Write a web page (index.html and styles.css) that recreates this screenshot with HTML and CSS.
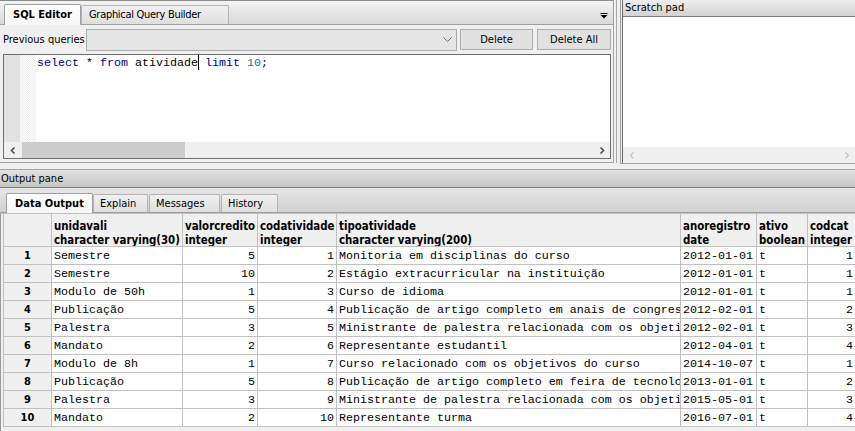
FILE: index.html
```html
<!DOCTYPE html>
<html lang="pt">
<head>
<meta charset="utf-8">
<title>Query</title>
<link rel="stylesheet" href="styles.css">
</head>
<body>
<div class="app">
  <div class="top">
    <div class="query-pane">
      <div class="tabbar">
        <div class="tab tab-active tab-sql">SQL Editor</div>
        <div class="tab tab-gqb">Graphical Query Builder</div>
        <svg class="tabmenu" width="8" height="6" viewBox="0 0 8 6"><rect x="0.5" y="0" width="7" height="1" fill="#000"/><path d="M0.5 2H7.5L4 5.5Z" fill="#000"/></svg>
      </div>
      <div class="prev-row">
        <span class="prev-label">Previous queries</span>
        <div class="combo">
          <svg class="combo-arrow" width="9" height="5" viewBox="0 0 9 5"><path d="M0.5 0.5L4.5 4.5L8.5 0.5" fill="none" stroke="#6d6d6d" stroke-width="1"/></svg>
        </div>
        <button class="btn btn-delete">Delete</button>
        <button class="btn btn-delete-all">Delete All</button>
      </div>
      <div class="editor">
        <div class="editor-body">
          <div class="gutter"></div>
          <div class="fold"></div>
          <div class="code"><span class="kw">select</span> * <span class="kw">from</span> atividade<span class="caret"></span> <span class="kw">limit</span> <span class="num">10</span>;</div>
        </div>
        <div class="hscroll">
          <div class="sb-btn"><svg width="6" height="7" viewBox="0 0 6 7"><path d="M4.5 0.5L1.5 3.5L4.5 6.5" fill="none" stroke="#505050" stroke-width="1.6"/></svg></div>
          <div class="sb-thumb"></div>
          <div class="sb-track"></div>
          <div class="sb-btn"><svg width="6" height="7" viewBox="0 0 6 7"><path d="M1.5 0.5L4.5 3.5L1.5 6.5" fill="none" stroke="#505050" stroke-width="1.6"/></svg></div>
        </div>
      </div>
    </div>
    <div class="sash"></div>
    <div class="scratch">
      <div class="scratch-inner">
        <div class="scratch-title">Scratch pad</div>
        <div class="scratch-area"></div>
        <div class="hscroll hscroll-off">
          <div class="sb-btn"><svg width="6" height="7" viewBox="0 0 6 7"><path d="M4.5 0.5L1.5 3.5L4.5 6.5" fill="none" stroke="#c4c4c4" stroke-width="1.4"/></svg></div>
          <div class="sb-track"></div>
          <div class="sb-btn"><svg width="6" height="7" viewBox="0 0 6 7"><path d="M1.5 0.5L4.5 3.5L1.5 6.5" fill="none" stroke="#c4c4c4" stroke-width="1.4"/></svg></div>
        </div>
      </div>
    </div>
  </div>

  <div class="output">
    <div class="output-title">Output pane</div>
    <div class="out-tabbar">
      <div class="tab tab-active tab-data">Data Output</div>
      <div class="tab tab-explain">Explain</div>
      <div class="tab tab-messages">Messages</div>
      <div class="tab tab-history">History</div>
    </div>
    <div class="grid">
      <div class="row head">
        <div class="cell rn"></div>
        <div class="cell hd">unidavali<br>character varying(30)</div>
        <div class="cell hd">valorcredito<br>integer</div>
        <div class="cell hd">codatividade<br>integer</div>
        <div class="cell hd">tipoatividade<br>character varying(200)</div>
        <div class="cell hd">anoregistro<br>date</div>
        <div class="cell hd">ativo<br>boolean</div>
        <div class="cell hd">codcat<br>integer</div>
      </div>
      <div class="row"><div class="cell rn">1</div><div class="cell">Semestre</div><div class="cell r">5</div><div class="cell r">1</div><div class="cell">Monitoria em disciplinas do curso</div><div class="cell">2012-01-01</div><div class="cell">t</div><div class="cell r">1</div></div>
      <div class="row"><div class="cell rn">2</div><div class="cell">Semestre</div><div class="cell r">10</div><div class="cell r">2</div><div class="cell">Estágio extracurricular na instituição</div><div class="cell">2012-01-01</div><div class="cell">t</div><div class="cell r">1</div></div>
      <div class="row"><div class="cell rn">3</div><div class="cell">Modulo de 50h</div><div class="cell r">1</div><div class="cell r">3</div><div class="cell">Curso de idioma</div><div class="cell">2012-01-01</div><div class="cell">t</div><div class="cell r">1</div></div>
      <div class="row"><div class="cell rn">4</div><div class="cell">Publicação</div><div class="cell r">5</div><div class="cell r">4</div><div class="cell">Publicação de artigo completo em anais de congres</div><div class="cell">2012-02-01</div><div class="cell">t</div><div class="cell r">2</div></div>
      <div class="row"><div class="cell rn">5</div><div class="cell">Palestra</div><div class="cell r">3</div><div class="cell r">5</div><div class="cell">Ministrante de palestra relacionada com os objeti</div><div class="cell">2012-02-01</div><div class="cell">t</div><div class="cell r">3</div></div>
      <div class="row"><div class="cell rn">6</div><div class="cell">Mandato</div><div class="cell r">2</div><div class="cell r">6</div><div class="cell">Representante estudantil</div><div class="cell">2012-04-01</div><div class="cell">t</div><div class="cell r">4</div></div>
      <div class="row"><div class="cell rn">7</div><div class="cell">Modulo de 8h</div><div class="cell r">1</div><div class="cell r">7</div><div class="cell">Curso relacionado com os objetivos do curso</div><div class="cell">2014-10-07</div><div class="cell">t</div><div class="cell r">1</div></div>
      <div class="row"><div class="cell rn">8</div><div class="cell">Publicação</div><div class="cell r">5</div><div class="cell r">8</div><div class="cell">Publicação de artigo completo em feira de tecnolo</div><div class="cell">2013-01-01</div><div class="cell">t</div><div class="cell r">2</div></div>
      <div class="row"><div class="cell rn">9</div><div class="cell">Palestra</div><div class="cell r">3</div><div class="cell r">9</div><div class="cell">Ministrante de palestra relacionada com os objeti</div><div class="cell">2015-05-01</div><div class="cell">t</div><div class="cell r">3</div></div>
      <div class="row"><div class="cell rn">10</div><div class="cell">Mandato</div><div class="cell r">2</div><div class="cell r">10</div><div class="cell">Representante turma</div><div class="cell">2016-07-01</div><div class="cell">t</div><div class="cell r">4</div></div>
    </div>
  </div>
</div>
</body>
</html>
```

FILE: styles.css
```css
* { box-sizing: border-box; }
html, body { margin: 0; padding: 0; }
body {
  width: 855px;
  height: 431px;
  overflow: hidden;
  background: #f0f0f0;
  font-family: "DejaVu Sans Condensed", "DejaVu Sans", sans-serif;
  font-size: 11px;
  color: #000;
}
.app { display: flex; flex-direction: column; height: 431px; }

/* ---------- top area ---------- */
.top { display: flex; height: 169px; flex: none; }
.query-pane {
  width: 614px;
  height: 163px;
  display: flex;
  flex-direction: column;
  border-right: 1px solid #a0a0a0;
  border-bottom: 1px solid #a0a0a0;
  background: #f0f0f0;
}
.tabbar {
  height: 25px;
  flex: none;
  display: flex;
  align-items: flex-end;
  padding-left: 4px;
  border-top: 1px solid #8c8c8c;
  border-bottom: 1px solid #a0a0a0;
  background: linear-gradient(#f3f3f3, #d9d9d9);
}
.tab {
  flex: none;
  height: 19px;
  line-height: 18px;
  padding-left: 7px;
  white-space: nowrap;
  border: 1px solid #b4b4b4;
  border-bottom: none;
  border-radius: 2px 2px 0 0;
  background: linear-gradient(#f0f0f0, #dedede);
}
.tab-active {
  height: 21px;
  margin-bottom: -1px;
  padding-left: 0;
  text-align: center;
  font-weight: bold;
  line-height: 19px;
  border-color: #a0a0a0;
  background: linear-gradient(#ffffff, #f6f6f6);
  position: relative;
}
.tab-sql { width: 77px; }
.tab-gqb { width: 148px; letter-spacing: -0.3px; }
.tabmenu { align-self: flex-start; margin: 12px 5px 0 auto; }

.prev-row {
  height: 29px;
  flex: none;
  display: flex;
  align-items: center;
  padding-left: 3px;
}
.prev-label { width: 83px; flex: none; white-space: nowrap; }
.combo {
  width: 371px;
  height: 22px;
  flex: none;
  display: flex;
  align-items: center;
  justify-content: flex-end;
  padding-right: 4px;
  background: #e5e5e5;
  border: 1px solid #acacac;
}
.btn {
  height: 21px;
  flex: none;
  margin: 0;
  padding: 0;
  font: inherit;
  color: #000;
  background: #e1e1e1;
  border: 1px solid #adadad;
}
.btn-delete { width: 73px; margin-left: 3px; }
.btn-delete-all { width: 74px; margin-left: 4px; }

.editor {
  width: 608px;
  height: 105px;
  margin-left: 3px;
  flex: none;
  display: flex;
  flex-direction: column;
  border: 1px solid #6e6e6e;
}
.editor-body { flex: 1; display: flex; background: #fff; }
.gutter { width: 16px; flex: none; background: #e2e2e2; }
.fold {
  width: 16px;
  flex: none;
  background: repeating-conic-gradient(#ececec 0 25%, #ffffff 0 50%) 0 0 / 2px 2px;
}
.code {
  padding-left: 1px;
  font-family: "Liberation Mono", monospace;
  font-size: 11.67px;
  line-height: 16px;
  white-space: pre;
  color: #000;
}
.kw { color: #00007f; }
.num { color: #007f7f; }
.caret {
  display: inline-block;
  width: 1px;
  height: 15px;
  margin-right: -1px;
  vertical-align: -4px;
  background: #000;
}

.hscroll {
  height: 16px;
  flex: none;
  display: flex;
  background: #f0f0f0;
}
.sb-btn {
  width: 17px;
  flex: none;
  display: flex;
  align-items: center;
  justify-content: center;
}
.sb-thumb { width: 163px; flex: none; background: #cdcdcd; margin-left: 1px; }
.sb-track { flex: 1; }

.sash { width: 4px; height: 163px; margin-left: 2px; border-left: 1px solid #a8a8a8; flex: none; }
.scratch {
  flex: 1;
  height: 164px;
  padding-left: 1px;
  border-left: 1px solid #a0a0a0;
  border-bottom: 1px solid #a0a0a0;
}
.scratch-inner {
  height: 100%;
  display: flex;
  flex-direction: column;
  border-left: 1px solid #6a6a6a;
}
.scratch-title {
  height: 17px;
  flex: none;
  padding-left: 2px;
  line-height: 16px;
  color: #000;
  border-bottom: 1px solid #7a7a7a;
  background: linear-gradient(#efefef, #d2d2d2);
}
.scratch-area { flex: 1; background: #fff; }

/* ---------- output ---------- */
.output { flex: 1; display: flex; flex-direction: column; min-height: 0; }
.output-title {
  height: 19px;
  flex: none;
  padding-left: 1px;
  line-height: 17px;
  border-top: 1px solid #a6a6a6;
  border-bottom: 1px solid #7c7c7c;
  background: linear-gradient(#e2e2e2, #c6c6c6);
}
.out-tabbar {
  height: 25px;
  flex: none;
  display: flex;
  align-items: flex-end;
  padding-left: 6px;
  border-bottom: 1px solid #a0a0a0;
  background: linear-gradient(#e6e6e6, #d2d2d2);
}
.out-tabbar .tab { height: 18px; line-height: 17px; padding-left: 6px; }
.out-tabbar .tab-active { height: 20px; line-height: 19px; padding-left: 0; }
.tab-data { width: 87px; }
.tab-explain { width: 55px; padding-left: 7px; }
.tab-messages { width: 71px; margin-left: 1px; }
.tab-history { width: 57px; margin-left: 1px; }

.grid {
  flex: 1;
  overflow: hidden;
  padding-left: 2px;
  border-left: 1px solid #9a9a9a;
  border-top: 1px solid #c0c0c0;
  background: #f0f0f0;
}
.row {
  display: grid;
  grid-template-columns: 49px 131px 75px 79px 344px 76px 51px 48px;
  height: 18px;
  background: #fff;
}
.cell {
  overflow: hidden;
  white-space: nowrap;
  padding: 1px 2px 0;
  border-right: 1px solid #c0c0c0;
  border-bottom: 1px solid #c0c0c0;
  font-family: "Liberation Mono", monospace;
  font-size: 11.67px;
  line-height: 16px;
}
.cell.r { text-align: right; }
.cell.rn {
  border-left: 1px solid #c0c0c0;
  background: #f0f0f0;
  text-align: center;
  font-family: "DejaVu Sans Condensed", "DejaVu Sans", sans-serif;
  font-size: 11px;
  font-weight: bold;
}
.row.head { height: 33px; }
.cell.hd {
  padding-top: 5px;
  background: #f0f0f0;
  font-family: "DejaVu Sans Condensed", "DejaVu Sans", sans-serif;
  font-size: 11.4px;
  font-weight: bold;
  line-height: 14px;
}
```
